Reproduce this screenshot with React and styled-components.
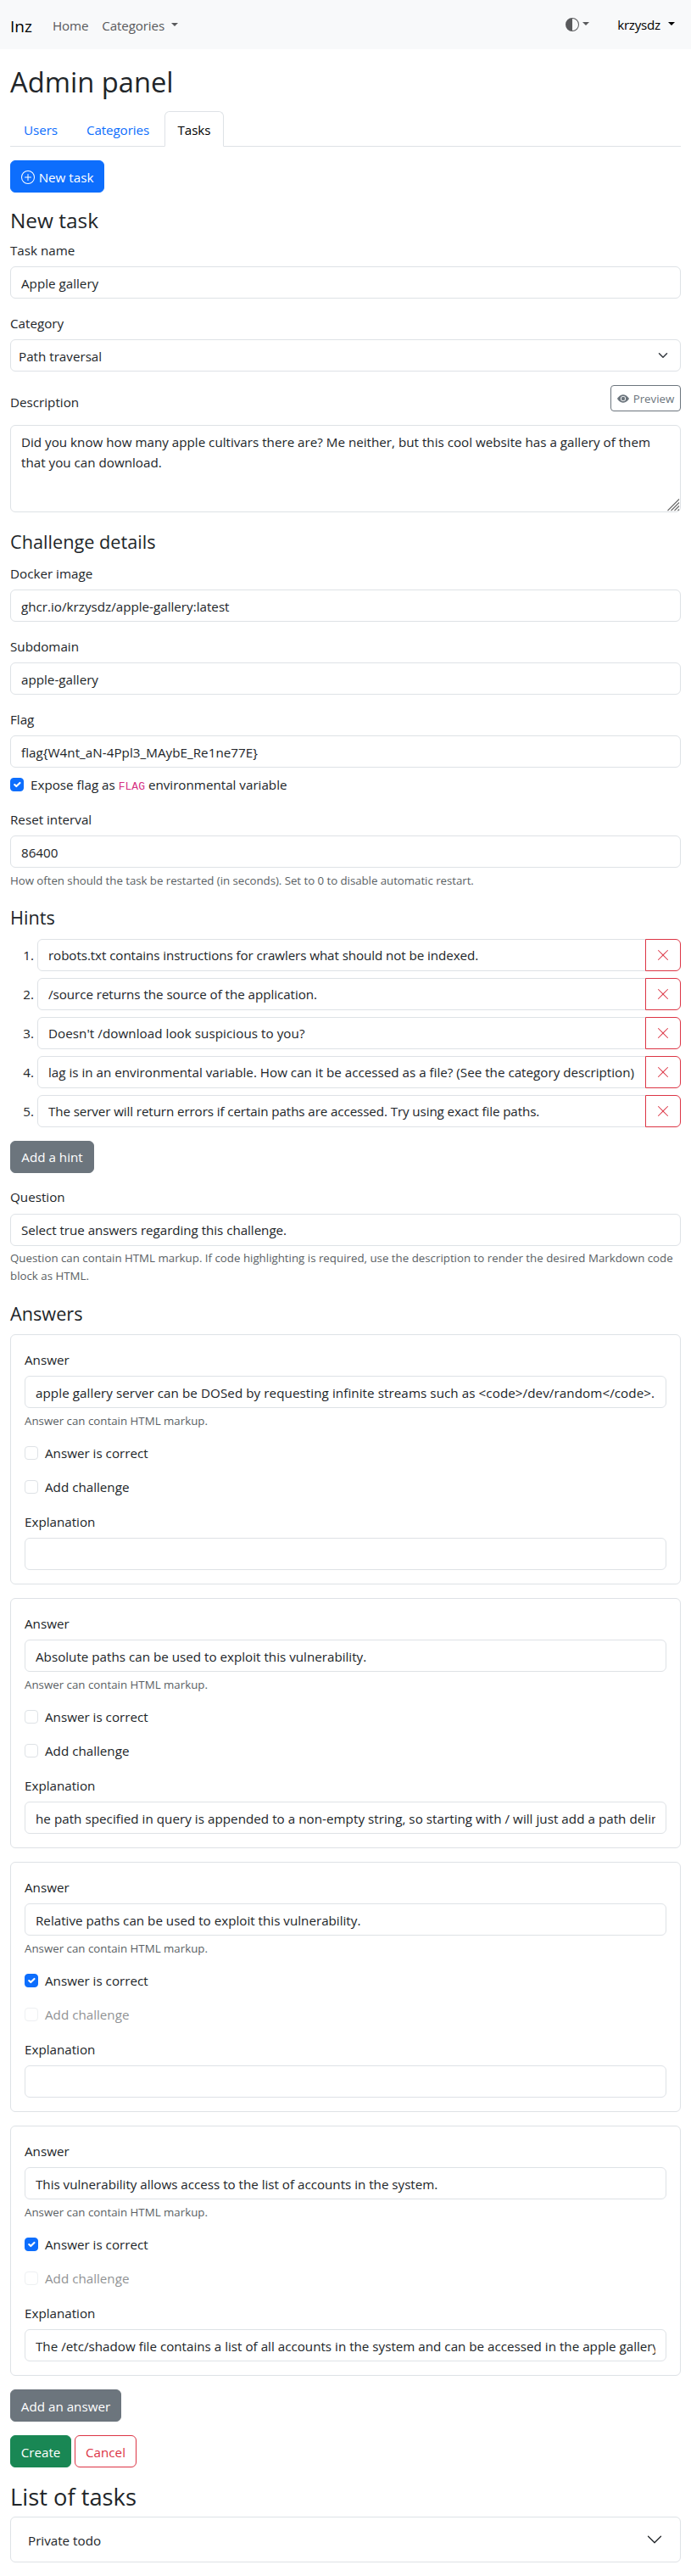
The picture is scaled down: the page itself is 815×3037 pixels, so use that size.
import React from "react";
import styled, { createGlobalStyle, css } from "styled-components";
import { BsPlusCircle, BsEyeFill, BsXLg, BsCircleHalf, BsChevronDown } from "react-icons/bs";

const GlobalStyle = createGlobalStyle`
  *, *::before, *::after { box-sizing: border-box; }
  body {
    margin: 0;
    background: #fff;
    color: #212529;
    font-family: "Open Sans", "Noto Sans", sans-serif;
    font-size: 15.2px;
    line-height: 24px;
  }
  button { font: inherit; }
`;

const Navbar = styled.nav`
  display: flex;
  align-items: center;
  height: 58px;
  padding: 0 12px;
  background: #f8f9fa;
`;

const Brand = styled.a`
  width: 50px;
  padding-top: 3px;
  font-size: 19px;
  line-height: 30px;
  color: #000;
`;

const NavItem = styled.a`
  display: flex;
  align-items: center;
  gap: 8px;
  padding-top: 2px;
  margin-right: ${(p) => p.$gap || 0}px;
  letter-spacing: -0.15px;
  color: #595a5c;
`;

const NavEnd = styled.div`
  display: flex;
  align-items: center;
  gap: 33px;
  margin-left: auto;
  padding-right: 7px;
`;

const Theme = styled.span`
  display: flex;
  align-items: center;
  gap: 4px;
  color: #595a5c;
`;

const Account = styled.span`
  display: flex;
  align-items: center;
  gap: 9px;
  letter-spacing: -0.25px;
  color: #000;
`;

const Caret = styled.i`
  border-top: 4.8px solid currentColor;
  border-left: 4.8px solid transparent;
  border-right: 4.8px solid transparent;
  margin-bottom: 2px;
`;

const Main = styled.main`
  padding: 16px 12px;
`;

const Title = styled.h1`
  margin: 0 0 14.3px;
  padding-top: 2px;
  font-size: 32.7px;
  font-weight: 400;
  line-height: 41px;
`;

const Tabs = styled.div`
  display: flex;
  height: 42px;
  margin-bottom: 16px;
  border-bottom: 1px solid #dee2e6;
`;

const Tab = styled.a`
  width: ${(p) => p.$w}px;
  height: 42px;
  padding-top: 9px;
  text-align: center;
  letter-spacing: -0.1px;
  color: #0d6efd;
  border: 1px solid transparent;
  border-radius: 6px 6px 0 0;
  ${(p) =>
    p.$active &&
    css`
      color: #000;
      background: #fff;
      border-color: #dee2e6 #dee2e6 #fff;
    `}
`;

const tones = {
  primary: ["#0d6efd", "#fff", "#0d6efd"],
  secondary: ["#6c757d", "#fff", "#6c757d"],
  success: ["#198754", "#fff", "#198754"],
  danger: ["#fff", "#dc3545", "#dc3545"],
  muted: ["#fff", "#6c757d", "#6c757d"],
};

const Button = styled.button`
  display: flex;
  align-items: center;
  justify-content: center;
  gap: 5px;
  width: ${(p) => p.$w}px;
  height: 38px;
  padding: 1px 0 0;
  white-space: nowrap;
  background: ${(p) => tones[p.$tone][0]};
  color: ${(p) => tones[p.$tone][1]};
  border: 1px solid ${(p) => tones[p.$tone][2]};
  border-radius: 6px;
`;

const SmallButton = styled(Button)`
  height: 31px;
  font-size: 13.3px;
  border-radius: 4px;
`;

const DeleteButton = styled(Button)`
  margin-left: -1px;
  padding: 0;
  border-radius: 0 6px 6px 0;
`;

const Actions = styled.div`
  display: flex;
  gap: 4px;
  margin: 16px 0;
`;

const FormTitle = styled.h3`
  margin: 0 0 6px;
  padding-top: 2px;
  font-size: 24.4px;
  font-weight: 400;
  line-height: 30.8px;
`;

const Legend = styled.h4`
  margin: 0 0 8px;
  padding-top: 1px;
  font-size: 21.7px;
  font-weight: 400;
  line-height: 33.5px;
`;

const Field = styled.div`
  margin-bottom: ${(p) => (p.$last ? 0 : 16)}px;
`;

const Label = styled.div`
  padding-top: 0.5px;
  margin-bottom: 7.5px;
`;

const Control = styled.div`
  flex: 1;
  min-width: 0;
  height: 38px;
  padding: 6.5px 12px 5.5px;
  border: 1px solid #dee2e6;
  border-radius: ${(p) => (p.$joined ? "6px 0 0 6px" : "6px")};
`;

const Value = styled.div`
  min-height: 24px;
  overflow: hidden;
  white-space: nowrap;
  letter-spacing: ${(p) => p.$ls || 0}px;
`;

const Select = styled(Control)`
  display: flex;
  justify-content: space-between;
  padding-left: 9px;
`;

const SelectArrow = styled.svg`
  margin: 5px 2px 0 0;
`;

const TextArea = styled(Control)`
  display: flex;
  flex-direction: column;
  justify-content: space-between;
  height: 103px;
  margin-bottom: 16.6px;
  padding-right: 0;
  padding-bottom: 0;
`;

const Grip = styled.svg`
  align-self: flex-end;
  display: block;
`;

const Split = styled.div`
  display: flex;
  justify-content: space-between;
  align-items: flex-end;
  margin-bottom: 16px;
`;

const SplitLabel = styled.div`
  line-height: 22px;
`;

const Help = styled.div`
  margin: 4.8px 0 -0.8px;
  font-size: 13.3px;
  line-height: 21px;
  letter-spacing: ${(p) => p.$ls || 0}px;
  color: #5a5f64;
`;

const CheckRow = styled.div`
  display: flex;
  align-items: flex-start;
  gap: 8px;
  height: 24px;
  margin: ${(p) => (p.$tight ? "8px" : "0")} 0 16px;
  opacity: ${(p) => (p.$disabled ? 0.5 : 1)};
`;

const Box = styled.span`
  display: flex;
  width: 16px;
  height: 16px;
  margin-top: 4px;
  border: 1px solid ${(p) => (p.$on ? "#0d6efd" : "#dee2e6")};
  border-radius: 4px;
  background: ${(p) => (p.$on ? "#0d6efd" : "#fff")};
`;

const CheckText = styled.span`
  padding-top: 1px;
  line-height: 23px;
`;

const Code = styled.code`
  font-family: "Liberation Mono", monospace;
  font-size: 13px;
  line-height: 1;
  color: #d63384;
`;

const HintList = styled.div`
  display: flex;
  flex-direction: column;
  gap: 8px;
`;

const Hint = styled.div`
  display: flex;
  align-items: center;
`;

const HintNumber = styled.span`
  width: 32px;
  padding: 1px 4px 0 0;
  text-align: right;
`;

const Card = styled.section`
  margin-bottom: 16px;
  padding: 16px;
  border: 1px solid #dee2e6;
  border-radius: 6px;
`;

const ListTitle = styled.h2`
  margin: 0 0 6px;
  padding-top: 2px;
  font-size: 27.3px;
  font-weight: 400;
  line-height: 34.2px;
`;

const Accordion = styled.div`
  display: flex;
  align-items: center;
  justify-content: space-between;
  height: 54px;
  padding: 0 20px;
  border: 1px solid #dee2e6;
  border-radius: 6px;
`;

const AccordionTitle = styled.span`
  padding-top: 1px;
`;

function Check({ on, disabled, tight, children }) {
  return (
    <CheckRow $disabled={disabled} $tight={tight}>
      <Box $on={on}>
        {on && (
          <svg width="14" height="14" viewBox="0 0 20 20" fill="none" stroke="#fff" strokeWidth="3" strokeLinecap="round" strokeLinejoin="round">
            <path d="m6 10 3 3 6-6" />
          </svg>
        )}
      </Box>
      <CheckText>{children}</CheckText>
    </CheckRow>
  );
}

function Input({ label, value, help, last, ls, helpLs }) {
  return (
    <Field $last={last}>
      <Label>{label}</Label>
      <Control>
        <Value $ls={ls}>{value}</Value>
      </Control>
      {help && <Help $ls={helpLs}>{help}</Help>}
    </Field>
  );
}

const hints = [
  { text: "robots.txt contains instructions for crawlers what should not be indexed.", ls: -0.09 },
  { text: "/source returns the source of the application.", ls: -0.06 },
  { text: "Doesn't /download look suspicious to you?", ls: 0.05 },
  { text: "lag is in an environmental variable. How can it be accessed as a file? (See the category description)" },
  { text: "The server will return errors if certain paths are accessed. Try using exact file paths.", ls: -0.11 },
];

const answers = [
  {
    text: "apple gallery server can be DOSed by requesting infinite streams such as <code>/dev/random</code>.",
    ls: 0.07,
    note: "",
  },
  {
    text: "Absolute paths can be used to exploit this vulnerability.",
    note: "he path specified in query is appended to a non-empty string, so starting with / will just add a path delimiter",
    noteLs: 0.03,
  },
  { text: "Relative paths can be used to exploit this vulnerability.", correct: true, note: "" },
  {
    text: "This vulnerability allows access to the list of accounts in the system.",
    ls: -0.02,
    correct: true,
    note: "The /etc/shadow file contains a list of all accounts in the system and can be accessed in the apple gallery",
  },
];

export default function App() {
  return (
    <>
      <GlobalStyle />
      <Navbar>
        <Brand>Inz</Brand>
        <NavItem $gap={16}>Home</NavItem>
        <NavItem>
          Categories <Caret />
        </NavItem>
        <NavEnd>
          <Theme>
            <BsCircleHalf size={16} />
            <Caret />
          </Theme>
          <Account>
            krzysdz <Caret />
          </Account>
        </NavEnd>
      </Navbar>
      <Main>
        <Title>Admin panel</Title>
        <Tabs>
          <Tab $w={72}>Users</Tab>
          <Tab $w={110}>Categories</Tab>
          <Tab $w={70} $active>
            Tasks
          </Tab>
        </Tabs>
        <Actions>
          <Button $tone="primary" $w={111}>
            <BsPlusCircle size={16} />
            New task
          </Button>
        </Actions>
        <FormTitle>New task</FormTitle>
        <Input label="Task name" value="Apple gallery" />
        <Field>
          <Label>Category</Label>
          <Select>
            <Value>Path traversal</Value>
            <SelectArrow width="12" height="12" viewBox="0 0 16 16" fill="none" stroke="#343a40" strokeWidth="2" strokeLinecap="round" strokeLinejoin="round">
              <path d="m2 5 6 6 6-6" />
            </SelectArrow>
          </Select>
        </Field>
        <Split>
          <SplitLabel>Description</SplitLabel>
          <SmallButton $tone="muted" $w={83}>
            <BsEyeFill size={14} />
            Preview
          </SmallButton>
        </Split>
        <TextArea>
          <Value>
            Did you know how many apple cultivars there are? Me neither, but this cool website has a gallery of them
            <br />
            that you can download.
          </Value>
          <Grip width="15" height="15" viewBox="0 0 15 15" stroke="#6b6b6b" strokeWidth="1.1">
            <path d="M.5 14 14 .5M4.5 14 14 4.5M8.5 14 14 8.5M12.5 14 14 12.5" />
          </Grip>
        </TextArea>
        <Legend>Challenge details</Legend>
        <Input label="Docker image" value="ghcr.io/krzysdz/apple-gallery:latest" />
        <Input label="Subdomain" value="apple-gallery" />
        <Input label="Flag" value="flag{W4nt_aN-4Ppl3_MAybE_Re1ne77E}" ls={0.04} last />
        <Check on tight>
          Expose flag as <Code>FLAG</Code> environmental variable
        </Check>
        <Input
          label="Reset interval"
          value="86400"
          help="How often should the task be restarted (in seconds). Set to 0 to disable automatic restart."
          helpLs={-0.05}
        />
        <Legend>Hints</Legend>
        <HintList>
          {hints.map((hint, i) => (
            <Hint key={i}>
              <HintNumber>{i + 1}.</HintNumber>
              <Control $joined>
                <Value $ls={hint.ls}>{hint.text}</Value>
              </Control>
              <DeleteButton $tone="danger" $w={42}>
                <BsXLg size={16} />
              </DeleteButton>
            </Hint>
          ))}
        </HintList>
        <Actions>
          <Button $tone="secondary" $w={99}>
            Add a hint
          </Button>
        </Actions>
        <Input
          label="Question"
          value="Select true answers regarding this challenge."
          ls={-0.05}
          help={
            <>
              Question can contain HTML markup. If code highlighting is required, use the description to render the desired Markdown code
              <br />
              block as HTML.
            </>
          }
        />
        <Legend>Answers</Legend>
        {answers.map((answer, i) => (
          <Card key={i}>
            <Input label="Answer" value={answer.text} ls={answer.ls} help="Answer can contain HTML markup." />
            <Check on={answer.correct}>Answer is correct</Check>
            <Check disabled={answer.correct}>Add challenge</Check>
            <Input label="Explanation" value={answer.note} ls={answer.noteLs} last />
          </Card>
        ))}
        <Actions>
          <Button $tone="secondary" $w={131}>
            Add an answer
          </Button>
        </Actions>
        <Actions>
          <Button $tone="success" $w={72}>
            Create
          </Button>
          <Button $tone="danger" $w={73}>
            Cancel
          </Button>
        </Actions>
        <ListTitle>List of tasks</ListTitle>
        <Accordion>
          <AccordionTitle>Private todo</AccordionTitle>
          <BsChevronDown size={20} />
        </Accordion>
      </Main>
    </>
  );
}
